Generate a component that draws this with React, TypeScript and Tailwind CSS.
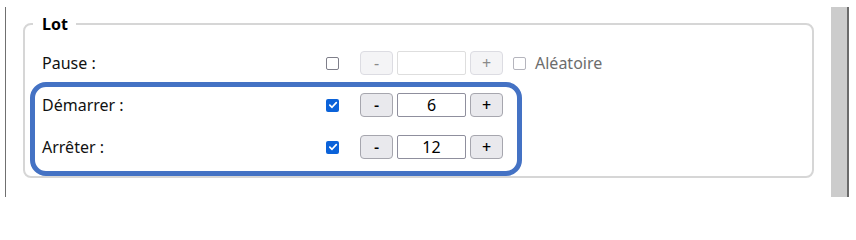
import React from 'react';

const font = { fontFamily: '"Segoe UI", "Noto Sans", "Open Sans", sans-serif' };

function Box({ checked, disabled }: { checked?: boolean; disabled?: boolean }) {
  if (checked) {
    return (
      <span className="flex h-[13px] w-[13px] items-center justify-center rounded-[2px] bg-[#0b62d9]">
        <svg width="10" height="10" viewBox="0 0 10 10" fill="none">
          <path d="M1.8 5.2 L4 7.3 L8.3 2.6" stroke="white" strokeWidth="1.7" strokeLinecap="round" strokeLinejoin="round" />
        </svg>
      </span>
    );
  }
  return (
    <span
      className={
        disabled
          ? 'block h-[13px] w-[13px] rounded-[2px] border border-[#b5b5bd] bg-white'
          : 'block h-[13px] w-[13px] rounded-[2px] border border-[#7f7f8a] bg-white'
      }
    />
  );
}

function Stepper({ value, disabled }: { value?: string; disabled?: boolean }) {
  const btn = disabled
    ? 'flex h-6 w-[33px] items-center justify-center rounded-[4px] border border-[#dcdce2] bg-[#f4f4f6] text-[16px] text-[#8a8a8a]'
    : 'flex h-6 w-[33px] items-center justify-center rounded-[4px] border border-[#a6a6ae] bg-[#e9e9ed] text-[16px] font-medium text-black';
  const input = disabled
    ? 'flex h-6 w-[69px] items-center justify-center rounded-[2px] border border-[#dedede] bg-white'
    : 'flex h-6 w-[69px] items-center justify-center rounded-[2px] border border-[#8f8f9d] bg-white text-[16px] text-black';
  return (
    <div className="flex items-center gap-1">
      <span className={btn}>-</span>
      <span className={input}>{value}</span>
      <span className={btn}>+</span>
    </div>
  );
}

const rows = [
  { label: 'Pause :', checked: false, value: '', disabled: true, random: true },
  { label: 'Démarrer :', checked: true, value: '6', disabled: false, random: false },
  { label: 'Arrêter :', checked: true, value: '12', disabled: false, random: false },
];

export default function App() {
  return (
    <div className="relative flex h-[206px] w-[856px] bg-white text-[16px] text-[#111]" style={font}>
      <div className="ml-[5px] mt-[7px] h-[190px] w-px bg-[#707070]" />

      <fieldset className="ml-[17px] mt-[14px] h-[164px] w-[791px] rounded-lg border-2 border-[#d6d6d6]">
        <legend className="ml-2 pl-[9px] pr-2 text-[16px] font-bold leading-5 text-black">Lot</legend>
        <div className="flex flex-col gap-[18px] pl-[17px] pt-[17px]">
          {rows.map((r) => (
            <div key={r.label} className="flex h-6 items-center">
              <span className="w-[284px]">{r.label}</span>
              <Box checked={r.checked} />
              <div className="ml-[21px]">
                <Stepper value={r.value} disabled={r.disabled} />
              </div>
              {r.random && (
                <div className="ml-[10px] flex items-center gap-[9px] text-[#6d6d6d]">
                  <Box disabled />
                  <span>Aléatoire</span>
                </div>
              )}
            </div>
          ))}
        </div>
      </fieldset>

      <div className="ml-[17px] mt-[7px] h-[190px] w-[18px] border-r-2 border-[#6b6b6b] bg-[#cccccc]" />

      <div className="pointer-events-none absolute left-[30px] top-[82px] h-[94px] w-[492px] rounded-[16px] border-[5px] border-[#4472c4]" />
    </div>
  );
}
